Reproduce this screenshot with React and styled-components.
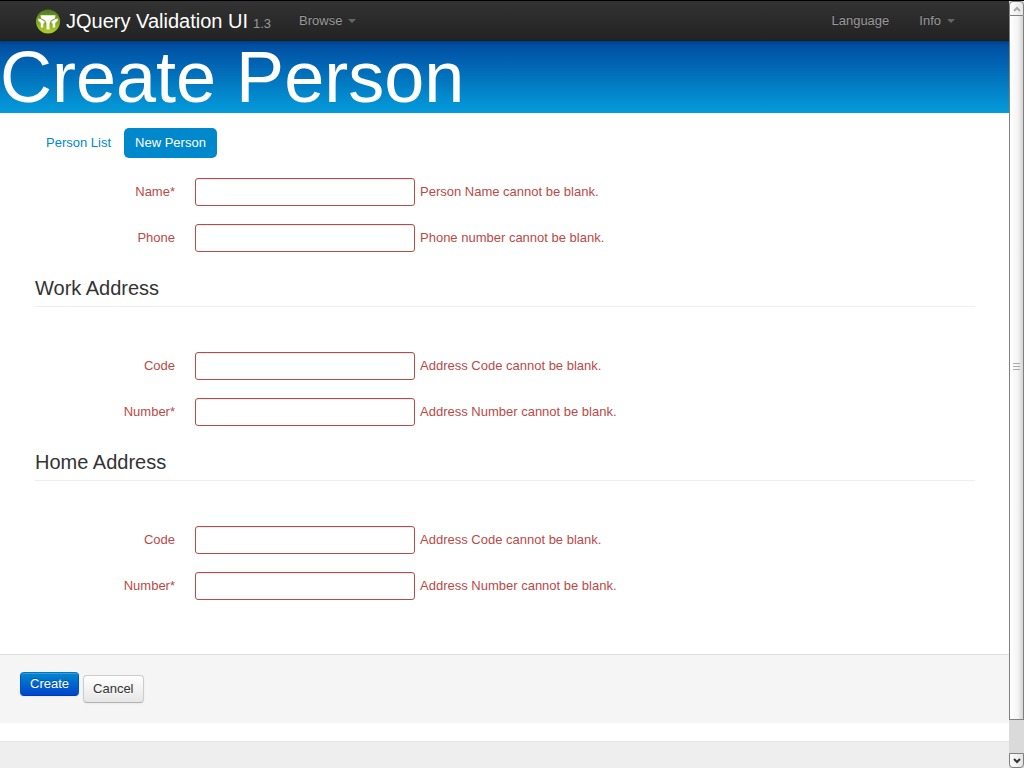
import React from "react";
import styled, { createGlobalStyle } from "styled-components";

const GlobalStyle = createGlobalStyle`
  * {
    box-sizing: border-box;
  }

  body {
    margin: 0;
    overflow: hidden;
    background: #ffffff;
    color: #333333;
    font-family: "Liberation Sans", Arial, sans-serif;
    font-size: 13px;
    line-height: 18px;
  }
`;

// Layout
const Window = styled.div`
  display: flex;
  height: 100vh;
`;

const Page = styled.div`
  flex: 1;
  min-width: 0;
  display: flex;
  flex-direction: column;
  overflow: hidden;
`;

const Container = styled.div`
  width: 100%;
  margin: 0 auto;
  padding: 0 34px 0 35px;
`;

// Navbar
const Navbar = styled.header`
  flex-shrink: 0;
  z-index: 1;
  border-top: 1px solid #000000;
  background: linear-gradient(to bottom, #333333, #222222);
  box-shadow: 0 1px 3px rgba(0, 0, 0, 0.25), inset 0 -1px 0 rgba(0, 0, 0, 0.1);
`;

const NavbarInner = styled(Container)`
  display: flex;
  align-items: center;
  height: 40px;
`;

const Brand = styled.a`
  display: flex;
  align-items: center;
  gap: 5px;
  margin-right: 18px;
  color: #ffffff;
  font-size: 20px;
  line-height: 24px;
  text-decoration: none;
  white-space: nowrap;
`;

const Version = styled.small`
  padding-top: 5px;
  color: #999999;
  font-size: 13px;
`;

const NavLink = styled.a`
  display: flex;
  align-items: center;
  padding: 10px;
  color: #999999;
  text-decoration: none;
  text-shadow: 0 -1px 0 rgba(0, 0, 0, 0.25);
`;

const NavRight = styled.nav`
  display: flex;
  gap: 10px;
  margin-left: auto;
  padding-right: 10px;
`;

const Caret = styled.span`
  margin-left: 6px;
  border-left: 4px solid transparent;
  border-right: 4px solid transparent;
  border-top: 4px solid #666666;
`;

const PageTitle = styled.h1`
  flex-shrink: 0;
  margin: 0;
  background: linear-gradient(to bottom, #004a9f, #049cdb);
  color: #ffffff;
  font-size: 72px;
  font-weight: 400;
  line-height: 72px;
  white-space: nowrap;
`;

// Pills
const Pills = styled.nav`
  display: flex;
  gap: 2px;
  margin: 15px 0 20px;
`;

const Pill = styled.a`
  padding: 6px 11px;
  border-radius: 5px;
  background: ${({ $active }) => ($active ? "#0088cc" : "transparent")};
  color: ${({ $active }) => ($active ? "#ffffff" : "#0088cc")};
  text-decoration: none;
`;

// Form
const Form = styled.form`
  display: flex;
  flex-direction: column;
  flex: none;
`;

const Fieldset = styled.fieldset`
  margin: 0;
  padding: 0;
  border: 0;
`;

const Legend = styled.legend`
  width: 100%;
  margin-bottom: 45px;
  padding: 0;
  border-bottom: 1px solid #eeeeee;
  color: #333333;
  font-size: 20px;
  line-height: 36px;
`;

const ControlGroup = styled.div`
  display: flex;
  align-items: center;
  margin-bottom: 18px;
  color: #b94a48;
`;

const Label = styled.label`
  width: 140px;
  margin-right: 20px;
  text-align: right;
`;

const Input = styled.input`
  width: 220px;
  height: 28px;
  padding: 4px;
  border: 1px solid #b94a48;
  border-radius: 3px;
  outline: none;
  background: #ffffff;
  box-shadow: inset 0 1px 1px rgba(0, 0, 0, 0.075);
  color: #b94a48;
  font: inherit;

  &:focus {
    border-color: #953b39;
    box-shadow: 0 0 6px #d59392;
  }
`;

const HelpInline = styled.span`
  padding-left: 5px;
`;

const FormActions = styled.div`
  display: flex;
  align-items: flex-start;
  gap: 4px;
  margin: 36px 0 18px;
  padding: 17px 20px 20px;
  border-top: 1px solid #dddddd;
  background: #f5f5f5;
`;

const Button = styled.button`
  height: 28px;
  margin-top: 3px;
  padding: 0 9px;
  border: 1px solid #cccccc;
  border-bottom-color: #b3b3b3;
  border-radius: 4px;
  background: linear-gradient(to bottom, #ffffff, #e6e6e6);
  box-shadow: inset 0 1px 0 rgba(255, 255, 255, 0.2), 0 1px 2px rgba(0, 0, 0, 0.05);
  color: #333333;
  font: inherit;
  text-shadow: 0 1px 1px rgba(255, 255, 255, 0.75);
  cursor: pointer;
`;

const PrimaryButton = styled(Button)`
  height: 24px;
  margin-top: 0;
  border-color: #0074cc #0055cc #003ab3;
  background: linear-gradient(to bottom, #0088cc, #0044cc);
  color: #ffffff;
  text-shadow: 0 -1px 0 rgba(0, 0, 0, 0.25);
`;

const Footer = styled.footer`
  flex: 1 0 27px;
  border-top: 1px solid #e5e5e5;
  background: #eeeeee;
`;

// Scrollbar
const ScrollTrack = styled.div`
  display: flex;
  flex-direction: column;
  width: 15px;
  border-top: 1px solid #000000;
  background: #dadada;
`;

const ScrollButton = styled.button`
  display: flex;
  align-items: center;
  justify-content: center;
  width: 15px;
  height: 15px;
  padding: 0;
  border: 1px solid #808080;
  border-radius: ${({ $down }) => ($down ? "0 0 4px 4px" : "4px 4px 0 0")};
  background: linear-gradient(to right, #ffffff, #e4e4e4);
  color: ${({ $down }) => ($down ? "#333333" : "#aaaaaa")};
`;

const ScrollThumb = styled.div`
  flex: 1;
  display: flex;
  flex-direction: column;
  align-items: center;
  justify-content: center;
  gap: 2px;
  margin-bottom: 33px;
  padding-bottom: 2px;
  border: 1px solid #808080;
  border-top: 0;
  background: linear-gradient(to right, #ffffff, #f4f4f4 60%, #d4d4d4);
`;

const Grip = styled.span`
  width: 7px;
  height: 1px;
  background: #aaaaaa;
`;

const Logo = () => (
  <svg width="26" height="25" viewBox="0 0 26 25" aria-hidden="true">
    <defs>
      <linearGradient id="logo" x1="0" y1="0" x2="0" y2="1">
        <stop offset="0" stopColor="#4d7a1e" />
        <stop offset="0.5" stopColor="#82a51f" />
        <stop offset="1" stopColor="#b2cf2c" />
      </linearGradient>
    </defs>
    <circle cx="13" cy="12.500" r="12" fill="url(#logo)" />
    <path d="M5.5 6.200h15l-.5 3-4 2.300-1.500 2.500v6.500h-3v-6.500l-1.500-2.500-4-2.300z" fill="#ffffff" />
    <path d="M3 9.500l2.500.5 4 2.500v1.500l-1.200.5v4H5.800v-4.500L3.500 12z" fill="#ffffff" />
    <path d="M23 9.500l-2.500.5-4 2.500v1.500l1.200.5v4h2.500v-4.500l2.300-2z" fill="#ffffff" />
  </svg>
);

const Chevron = ({ down }) => (
  <svg width="8" height="6" viewBox="0 0 8 6" fill="none" aria-hidden="true">
    <path d={down ? "M1 1l3 3 3-3" : "M1 5l3-3 3 3"} stroke="currentColor" strokeWidth="2" />
  </svg>
);

const Field = ({ id, label, error }) => (
  <ControlGroup>
    <Label htmlFor={id}>{label}</Label>
    <Input id={id} type="text" aria-invalid="true" aria-describedby={`${id}-error`} />
    <HelpInline id={`${id}-error`}>{error}</HelpInline>
  </ControlGroup>
);

const AddressFields = ({ prefix, title }) => (
  <Fieldset>
    <Legend>{title}</Legend>
    <Field id={`${prefix}-code`} label="Code" error="Address Code cannot be blank." />
    <Field id={`${prefix}-number`} label="Number*" error="Address Number cannot be blank." />
  </Fieldset>
);

const App = () => (
  <>
    <GlobalStyle />
    <Window>
      <Page>
        <Navbar>
          <NavbarInner>
            <Brand href="#">
              <Logo />
              JQuery Validation UI
              <Version>1.3</Version>
            </Brand>
            <NavLink href="#">
              Browse
              <Caret />
            </NavLink>
            <NavRight>
              <NavLink href="#">Language</NavLink>
              <NavLink href="#">
                Info
                <Caret />
              </NavLink>
            </NavRight>
          </NavbarInner>
        </Navbar>

        <PageTitle>Create Person</PageTitle>

        <Container>
          <Pills>
            <Pill href="#">Person List</Pill>
            <Pill href="#" $active>
              New Person
            </Pill>
          </Pills>
        </Container>

        <Form onSubmit={(e) => e.preventDefault()}>
          <Container>
            <Field id="name" label="Name*" error="Person Name cannot be blank." />
            <Field id="phone" label="Phone" error="Phone number cannot be blank." />
            <AddressFields prefix="work" title="Work Address" />
            <AddressFields prefix="home" title="Home Address" />
          </Container>
          <FormActions>
            <PrimaryButton type="submit">Create</PrimaryButton>
            <Button type="button">Cancel</Button>
          </FormActions>
        </Form>

        <Footer />
      </Page>

      <ScrollTrack>
        <ScrollButton type="button" aria-label="Scroll up">
          <Chevron />
        </ScrollButton>
        <ScrollThumb>
          <Grip />
          <Grip />
          <Grip />
        </ScrollThumb>
        <ScrollButton type="button" aria-label="Scroll down" $down>
          <Chevron down />
        </ScrollButton>
      </ScrollTrack>
    </Window>
  </>
);

export default App;
